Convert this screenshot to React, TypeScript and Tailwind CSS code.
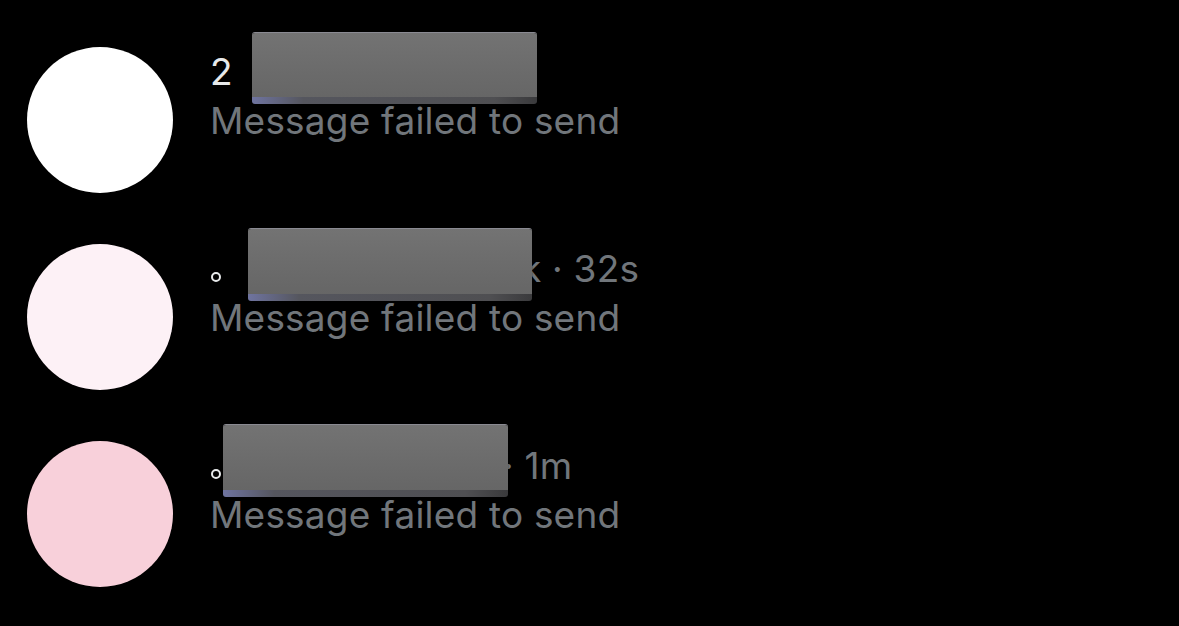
import React from "react"

interface Row {
  avatar: string
  ring: boolean
  spacer: number
  tail: string
  box: { left: number; top: number; width: number; height: number }
}

const rows: Row[] = [
  {
    avatar: "bg-[#ffffff]",
    ring: false,
    spacer: 300,
    tail: "",
    box: { left: 42, top: -15, width: 285, height: 72 },
  },
  {
    avatar: "bg-[#fdf1f6]",
    ring: true,
    spacer: 300,
    tail: "k · 32s",
    box: { left: 38, top: -16, width: 284, height: 73 },
  },
  {
    avatar: "bg-[#f8d0da]",
    ring: true,
    spacer: 282,
    tail: "· 1m",
    box: { left: 13, top: -17, width: 285, height: 73 },
  },
]

function Redaction({ box }: { box: Row["box"] }) {
  return (
    <div
      className="absolute flex flex-col overflow-hidden rounded-[3px] border-t border-t-[#8a8a92] shadow-[0_1px_2px_rgba(0,0,0,0.6)]"
      style={{ left: box.left, top: box.top, width: box.width, height: box.height }}
    >
      <div className="flex-1 bg-[linear-gradient(180deg,#737373_0%,#6b6b6b_60%,#666666_100%)]" />
      <div className="h-[7px] bg-[linear-gradient(90deg,#6f74a0_0%,#55565e_18%,#4f4f52_85%,#3a3a3c_100%)]" />
    </div>
  )
}

export default function App() {
  return (
    <main className="min-h-screen w-[1179px] h-[626px] overflow-hidden bg-black pt-[47px] pl-[27px] font-['Inter','Liberation_Sans',sans-serif]">
      <div className="flex flex-col">
        {rows.map((row, i) => (
          <div key={i} className="flex items-start gap-[37px] h-[197px]">
            <div className={`w-[146px] h-[146px] rounded-full shrink-0 ${row.avatar}`} />
            <div className="relative flex flex-col text-[37px] leading-[49px] tracking-[0.2px]">
              <div className="flex items-baseline text-[#e7e9ea] whitespace-nowrap">
                {row.ring ? (
                  <span className="inline-block w-[10px] h-[10px] ml-[1px] rounded-full border-2 border-[#e7e9ea]" />
                ) : (
                  <span>2</span>
                )}
                <span className="inline-block" style={{ width: row.spacer }} />
                {row.tail && <span className="text-[#71767b]">{row.tail}</span>}
              </div>
              <div className="text-[#71767b] whitespace-nowrap">Message failed to send</div>
              <Redaction box={row.box} />
            </div>
          </div>
        ))}
      </div>
    </main>
  )
}
